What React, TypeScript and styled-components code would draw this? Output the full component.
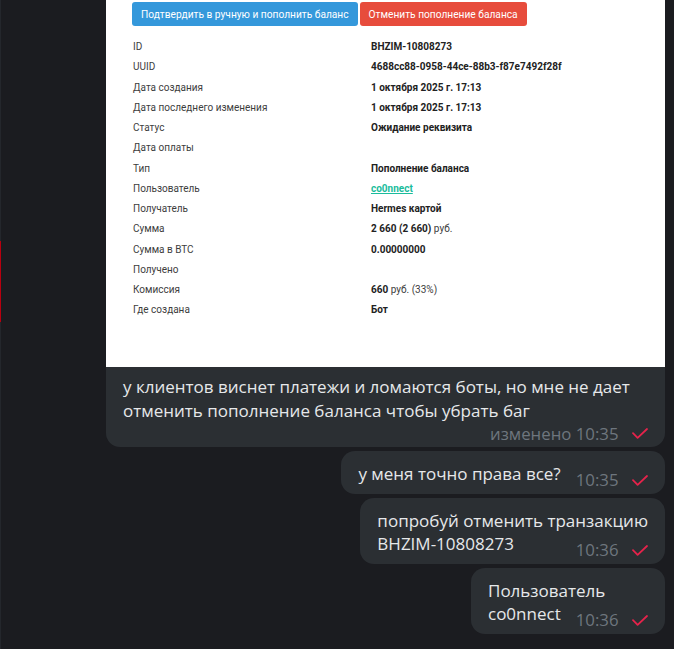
import React from 'react';
import styled, {createGlobalStyle} from "styled-components";

const Global = createGlobalStyle`
  html, body {
    margin: 0;
    padding: 0;
    background: #1b1c20;
  }
`

type Row = {
    label: string
    value?: React.ReactNode
}

const Check = () => (
    <CheckIcon viewBox="0 0 16 11" width={16} height={11}>
        <path d="M1 5.2 L5.6 9.8 L15 1" fill="none" stroke="currentColor" strokeWidth="1.8" strokeLinecap="round" strokeLinejoin="round"/>
    </CheckIcon>
)

const MetaInfo = ({time, edited}: { time: string, edited?: boolean }) => (
    <Meta>
        <span>{edited ? `изменено ${time}` : time}</span>
        <Check/>
    </Meta>
)

const App = () => {
    const rows: Row[] = [
        {label: 'ID', value: <b>BHZIM-10808273</b>},
        {label: 'UUID', value: <b>4688cc88-0958-44ce-88b3-f87e7492f28f</b>},
        {label: 'Дата создания', value: <b>1 октября 2025 г. 17:13</b>},
        {label: 'Дата последнего изменения', value: <b>1 октября 2025 г. 17:13</b>},
        {label: 'Статус', value: <b>Ожидание реквизита</b>},
        {label: 'Дата оплаты'},
        {label: 'Тип', value: <b>Пополнение баланса</b>},
        {label: 'Пользователь', value: <UserLink href={'#'}>co0nnect</UserLink>},
        {label: 'Получатель', value: <b>Hermes картой</b>},
        {label: 'Сумма', value: <><b>2 660 (2 660)</b> руб.</>},
        {label: 'Сумма в BTC', value: <b>0.00000000</b>},
        {label: 'Получено'},
        {label: 'Комиссия', value: <><b>660</b> руб. (33%)</>},
        {label: 'Где создана', value: <b>Бот</b>},
    ]

    return (
        <>
            <Global/>
            <Screen>
                <EdgeLine>
                    <EdgePart $h={241}/>
                    <EdgePart $h={81} $red/>
                    <EdgePart/>
                </EdgeLine>
                <Chat>
                    <Bubble $cutTop>
                        <Media>
                            <Buttons>
                                <ActionButton $color={'#3498db'}>Подтвердить в ручную и пополнить баланс</ActionButton>
                                <ActionButton $color={'#e74c3c'}>Отменить пополнение баланса</ActionButton>
                            </Buttons>
                            <Details>
                                {rows.map(r => (
                                    <React.Fragment key={r.label}>
                                        <Label>{r.label}</Label>
                                        <Value>{r.value}</Value>
                                    </React.Fragment>
                                ))}
                            </Details>
                        </Media>
                        <Caption $afterMedia>
                            <Line>у клиентов виснет платежи и ломаются боты, но мне не дает</Line>
                            <Line>отменить пополнение баланса чтобы убрать баг</Line>
                            <Footer $alone>
                                <MetaInfo time={'10:35'} edited/>
                            </Footer>
                        </Caption>
                    </Bubble>
                    <Bubble>
                        <Caption>
                            <Footer>
                                <Line>у меня точно права все?</Line>
                                <MetaInfo time={'10:35'}/>
                            </Footer>
                        </Caption>
                    </Bubble>
                    <Bubble>
                        <Caption>
                            <Line>попробуй отменить транзакцию</Line>
                            <Footer>
                                <Line>BHZIM-10808273</Line>
                                <MetaInfo time={'10:36'}/>
                            </Footer>
                        </Caption>
                    </Bubble>
                    <Bubble>
                        <Caption>
                            <Line>Пользователь</Line>
                            <Footer>
                                <Line>co0nnect</Line>
                                <MetaInfo time={'10:36'}/>
                            </Footer>
                        </Caption>
                    </Bubble>
                </Chat>
            </Screen>
        </>
    );
};

export default App;

const Screen = styled.div`
  display: flex;
  height: 649px;
  overflow: hidden;
  background: #1b1c20;
  font-family: "Open Sans", "Noto Sans", sans-serif;
`

const EdgeLine = styled.div`
  width: 1px;
  display: flex;
  flex-direction: column;
`

const EdgePart = styled.div<{ $h?: number, $red?: boolean }>`
  height: ${p => p.$h ? `${p.$h}px` : 'auto'};
  flex: ${p => p.$h ? 'none' : '1'};
  background: ${p => p.$red ? '#b8000f' : '#24272c'};
`

const Chat = styled.div`
  flex: 1;
  display: flex;
  flex-direction: column;
  align-items: flex-end;
  gap: 4px;
  padding: 0 9px 0 105px;
`

const Bubble = styled.div<{ $cutTop?: boolean }>`
  background: #2b2f33;
  border-radius: ${p => p.$cutTop ? '0 0 14px 14px' : '14px'};
  overflow: hidden;
  color: #e6e8ea;
`

const Media = styled.div`
  width: 559px;
  height: 367px;
  box-sizing: border-box;
  background: #ffffff;
  padding: 2px 26px 0;
  font-family: Roboto, "Liberation Sans", sans-serif;
  font-size: 10px;
`

const Buttons = styled.div`
  display: flex;
  gap: 2px;
`

const ActionButton = styled.button<{ $color: string }>`
  height: 24px;
  padding: 0 9px;
  border: none;
  border-radius: 3px;
  background: ${p => p.$color};
  color: #ffffff;
  font-family: Roboto, "Liberation Sans", sans-serif;
  font-size: 10.2px;
`

const Details = styled.div`
  display: grid;
  grid-template-columns: 239px 1fr;
  grid-auto-rows: 20.25px;
  align-items: center;
  margin-top: 10.5px;
  color: #3d3d3d;

  b {
    font-weight: 700;
    color: #222222;
  }
`

const Label = styled.div`
  padding-left: 1px;
`

const Value = styled.div`
`

const UserLink = styled.a`
  color: #1abc9c;
  font-weight: 700;
  text-decoration: underline;
`

const Caption = styled.div<{ $afterMedia?: boolean }>`
  padding: ${p => p.$afterMedia ? '8px' : '11px'} 17px 8px;
  font-size: 17px;
  line-height: 23.5px;
`

const Line = styled.div`
  white-space: nowrap;
`

const Footer = styled.div<{ $alone?: boolean }>`
  display: flex;
  justify-content: ${p => p.$alone ? 'flex-end' : 'space-between'};
  align-items: flex-end;
  margin-top: ${p => p.$alone ? '1.5px' : '0'};
`

const Meta = styled.div`
  display: flex;
  align-items: center;
  gap: 13.5px;
  margin-left: 15px;
  margin-bottom: -4.5px;
  line-height: 20px;
  font-size: 16.8px;
  color: #6e767e;
  white-space: nowrap;
`

const CheckIcon = styled.svg`
  color: #e5234b;
  flex: none;
`
